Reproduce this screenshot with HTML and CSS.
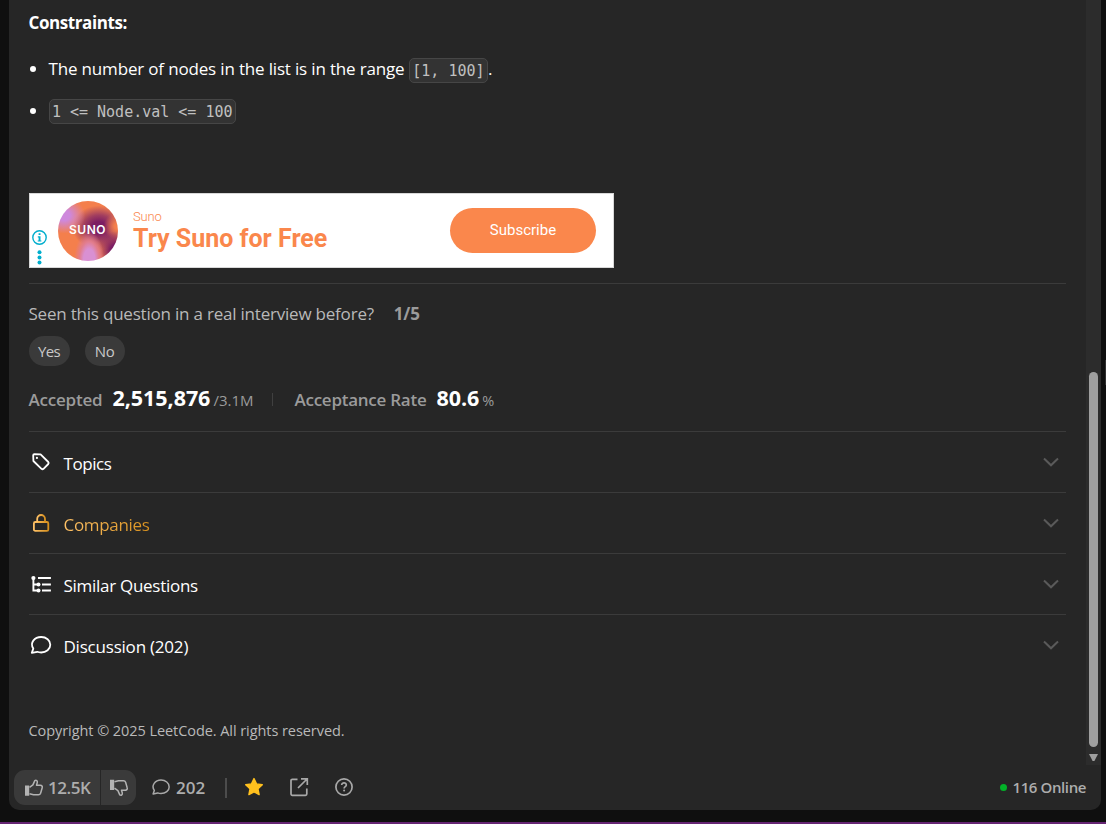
FILE: index.html
```html
<!DOCTYPE html>
<html lang="en">
<head>
<meta charset="utf-8">
<title>LeetCode</title>
<link rel="stylesheet" href="styles.css">
</head>
<body>
<div class="panel">
  <div class="scroller">
    <main class="content">
      <h2 class="constraints-title"><span class="t-constraints">Constraints:</span></h2>
      <ul class="constraints">
        <li><span class="t-range">The number of nodes in the list is in the range</span> <code>[1, 100]</code>.</li>
        <li><code>1 &lt;= Node.val &lt;= 100</code></li>
      </ul>
      <section class="ad">
        <div class="ad-marks">
          <svg width="16" height="36" viewBox="0 0 16 36"><circle cx="8.500" cy="8.500" r="6.700" fill="none" stroke="#00aecd" stroke-width="1.400"/><path d="M7.600 4.300h1.900v1.800H7.600zM6.800 7.300h2.700v4.200h.9v1.100H6.700v-1.100h.9V8.400h-.8z" fill="#00aecd"/><g fill="#00aecd"><circle cx="8.500" cy="23.300" r="2"/><circle cx="8.500" cy="28.400" r="2"/><circle cx="8.500" cy="33.500" r="2"/></g></svg>
        </div>
        <div class="ad-logo"><span>SUNO</span></div>
        <div class="ad-copy"><div class="ad-brand">Suno</div><div class="ad-head">Try Suno for Free</div></div>
        <div class="ad-button">Subscribe</div>
      </section>
      <section class="stats">
        <div class="seen"><span class="t-seen">Seen this question in a real interview before?</span><b class="t-frac">1/5</b></div>
        <div class="answers"><div class="pill yes">Yes</div><div class="pill no">No</div></div>
        <div class="numbers">
          <span class="label t-acc">Accepted</span><span class="big">2,515,876</span><span class="small">/3.1M</span>
          <i class="sep"></i>
          <span class="label t-rate">Acceptance Rate</span><span class="big">80.6</span><span class="small t-pct">%</span>
        </div>
      </section>
      <div class="row"><svg class="ic" width="24" height="24" viewBox="0 0 24 24" fill="none" stroke="#fff" stroke-width="1.800" stroke-linejoin="round"><path d="M5.300 4.200 11.600 4.400 19.300 12Q20.100 13 19.300 14L14.500 18.800Q13.500 19.600 12.500 18.800L4.400 11 4.200 5.300Q4.200 4.200 5.300 4.200Z"/><circle cx="7.900" cy="7.900" r="1.100" fill="#fff" stroke="none"/></svg><span class="t-topics">Topics</span><svg class="chev" width="16" height="10" viewBox="0 0 16 10"><path d="M1 1.500 8 8.300 15 1.500"/></svg></div>
      <div class="row"><svg class="ic" width="24" height="24" viewBox="0 0 24 24" fill="none" stroke="url(#gold)" stroke-width="1.800"><defs><linearGradient id="gold"><stop stop-color="#ffc267"/><stop offset="1" stop-color="#d7901e"/></linearGradient></defs><rect x="4.900" y="11" width="14.400" height="8.800" rx="1.400"/><path d="M8.200 11V7.900a3.900 3.900 0 0 1 7.800 0v3.100"/></svg><span class="companies">Companies</span><svg class="chev" width="16" height="10" viewBox="0 0 16 10"><path d="M1 1.500 8 8.300 15 1.500"/></svg></div>
      <div class="row"><svg class="ic" width="24" height="24" viewBox="0 0 24 24" fill="none" stroke="#fff" stroke-width="1.900"><path d="M4.400 5v13.500H9.500M4.400 12.500H9.500M9 6H21.900M13 12.500H21.900M13 18.500H21.900"/><g fill="#fff" stroke="none"><circle cx="4.400" cy="6" r="2.100"/><circle cx="9.500" cy="12.500" r="2"/><circle cx="9.500" cy="18.500" r="2"/></g></svg><span class="t-sim">Similar Questions</span><svg class="chev" width="16" height="10" viewBox="0 0 16 10"><path d="M1 1.500 8 8.300 15 1.500"/></svg></div>
      <div class="row last"><svg class="ic" width="24" height="24" viewBox="0 0 24 24" fill="none" stroke="#fff" stroke-width="1.800" stroke-linejoin="round"><path d="M2.800 19.900 4.300 15.600C.5 9.800 5.500 4 12.200 4c5 0 9.100 3.300 9.100 7.700S17.200 19.500 12.200 19.500c-1.500 0-2.800-.2-3.900-.7Z"/></svg><span class="t-disc">Discussion (202)</span><svg class="chev" width="16" height="10" viewBox="0 0 16 10"><path d="M1 1.500 8 8.300 15 1.500"/></svg></div>
      <footer class="copyright">Copyright © 2025 LeetCode. All rights reserved.</footer>
    </main>
    <div class="track"><div class="thumb"></div><div class="arrow"></div></div>
  </div>
  <div class="bar">
    <div class="votes">
      <div class="up"><svg width="20" height="20" viewBox="0 0 20 20"><path d="M1 7.500h4.200v10.300H1z" fill="#b3b3b3"/><path d="M5.500 9.300 8.900 6.900 10.800 2.600c1.500-.9 2.900.4 2.500 1.900L12.500 7.300h3.900c1.400 0 2.200 1.200 1.800 2.400l-1.600 5.500c-.4 1.100-1 1.500-2.100 1.500H9.500L5.500 15.700" fill="none" stroke="#b3b3b3" stroke-width="1.500" stroke-linejoin="round"/></svg><b class="t-votes">12.5K</b></div>
      <div class="down"><svg width="20" height="20" viewBox="0 0 20 20"><g transform="matrix(1 0 0 -1 0 19.500)"><path d="M1 7.500h4.200v10.300H1z" fill="#b3b3b3"/><path d="M5.500 9.300 8.900 6.900 10.800 2.600c1.500-.9 2.900.4 2.500 1.900L12.500 7.300h3.900c1.400 0 2.200 1.200 1.800 2.400l-1.600 5.500c-.4 1.100-1 1.500-2.100 1.500H9.500L5.500 15.700" fill="none" stroke="#b3b3b3" stroke-width="1.500" stroke-linejoin="round"/></g></svg></div>
    </div>
    <svg class="comment" width="20" height="20" viewBox="0 0 24 24" fill="none" stroke="#a8a8a8" stroke-width="1.800" stroke-linejoin="round"><path d="M2.500 19.100 4 14.900C-.2 9 5 2.500 12 2.500c5.400 0 9.800 3.500 9.800 8.200s-4.400 7.900-9.800 7.900c-1.500 0-2.800-.2-3.900-.7Z"/></svg><b>202</b>
    <i class="bar-sep"></i>
    <svg class="star" width="20" height="20" viewBox="0 0 20 20"><path d="M10 1.600 12.500 6.900 18.300 7.700 14 11.800 15.100 17.600 10 14.800 4.900 17.600 6 11.800 1.700 7.700 7.500 6.900Z" fill="#ffc01e" stroke="#ffc01e" stroke-width="1.400" stroke-linejoin="round"/></svg>
    <svg class="share" width="20" height="20" viewBox="0 0 20 20" fill="none" stroke="#a8a8a8" stroke-width="1.700"><path d="M8.500 2.300H3.300a1.300 1.300 0 0 0-1.300 1.300V17a1.300 1.300 0 0 0 1.300 1.300H16.500A1.300 1.300 0 0 0 17.800 17V11.500M12 1.800h6.300V8M18 2 9 11"/></svg>
    <svg class="help" width="20" height="20" viewBox="0 0 20 20" fill="none" stroke="#a8a8a8" stroke-width="1.700"><circle cx="10" cy="10" r="8.100"/><path d="M7.700 8.100C7.700 5 12.400 5.200 12.300 8c0 1.600-2.200 1.600-2.200 3.400"/><circle cx="10.100" cy="13.600" r="1" fill="#a8a8a8" stroke="none"/></svg>
    <i class="dot"></i><span class="online">116 Online</span>
  </div>
</div>
<div class="edge"></div>
<div class="purple"></div>
</body>
</html>
```
FILE: styles.css
```css
* { box-sizing: border-box; }
body { margin: 0; width: 1106px; height: 824px; background: #0f0f0f; color: #fff; font-family: "Open Sans", "Noto Sans", sans-serif; font-size: 17px; overflow: hidden; position: relative; }
span, b { white-space: nowrap; }
svg { display: block; flex: none; }
.panel { margin-left: 9px; width: 1092px; height: 810px; background: #262626; border-radius: 0 0 10px 10px; overflow: hidden; }
.scroller { display: flex; height: 765px; }
.content { width: 1077px; padding: 0 20px 0 19.5px; }
.constraints-title { margin: 0; padding-top: 9px; height: 48px; font-size: 17px; line-height: 28px; font-weight: 700; letter-spacing: -.42px; }
.constraints { margin: 0; padding: 0 0 0 20px; height: 145px; list-style: none; line-height: 42px; }
.constraints li { height: 42px; position: relative; white-space: nowrap; }
.constraints li::before { content: ""; position: absolute; left: -19px; top: 18px; width: 6px; height: 6px; border-radius: 50%; background: #fff; }
.t-range { letter-spacing: -.168px; }
code { font: 15px/20px "DejaVu Sans Mono", monospace; padding: 2px 2.4px 1px; border: 1px solid #464646; border-radius: 5px; background: #333; color: #c0c0c0; display: inline-block; height: 25px; vertical-align: -1px; }
.constraints li + li code { vertical-align: 0; }
.ad { display: flex; width: 585px; height: 75px; background: #fff; border: 1px solid #d8d8d8; font-family: Roboto, sans-serif; color: #fa874c; }
.ad-marks { width: 28px; padding: 35px 0 0 1px; }
.ad-logo { width: 60px; height: 60px; margin-top: 7px; border-radius: 50%; display: flex; align-items: center; justify-content: center; color: #fff; font: 600 12px/18px Inter, sans-serif; letter-spacing: .5px; padding-bottom: 2px; background: radial-gradient(ellipse at 52% 98%, #d990d3 0 13%, #e27d8d 22%, transparent 34%), radial-gradient(ellipse at 10% 24%, #ce88dc 0 8%, transparent 28%), radial-gradient(circle at 97% 82%, #7c1d63 0 8%, transparent 25%), radial-gradient(circle at 99% 42%, #f47f4c 0 4%, transparent 20%), radial-gradient(ellipse at 68% 44%, #7c1d63 0 12%, #a23e5f 26%, transparent 46%), #f47f4c; }
.ad-copy { margin-left: 15.5px; width: 316.5px; padding-top: 15px; }
.ad-brand { font-size: 13px; font-weight: 300; line-height: 16px; letter-spacing: -.2px; }
.ad-head { font-size: 25px; font-weight: 700; line-height: 28px; }
.ad-button { width: 146px; height: 45px; margin-top: 14px; border-radius: 23px; background: #fa874c; color: #fff; font-size: 15px; line-height: 44px; text-align: center; padding-left: 1px; }
.stats { margin-top: 15px; height: 148px; border-top: 1px solid #3b3b3b; color: #b9b9b9; }
.seen { display: flex; gap: 20px; height: 52px; padding-top: 16px; line-height: 28px; }
.t-seen { letter-spacing: -.21px; }
.t-frac { font-weight: 700; color: #9b9b9b; letter-spacing: -.2px; }
.answers { display: flex; gap: 15px; }
.pill { height: 30px; border-radius: 15px; background: #3a3a3a; color: #c9c9c9; font-size: 15px; line-height: 30px; text-align: center; letter-spacing: -.3px; }
.yes { width: 41px; letter-spacing: -.65px; }
.no { width: 40px; }
.numbers { display: flex; align-items: baseline; height: 48px; padding-top: 16px; line-height: 32px; white-space: nowrap; }
.label { font-weight: 600; color: #9b9b9b; }
.t-acc { width: 74px; letter-spacing: -.2px; }
.t-rate { width: 132px; letter-spacing: -.25px; }
.big { font-size: 21.5px; font-weight: 700; color: #fff; margin-left: 10px; letter-spacing: -.05px; }
.small { font-size: 15px; color: #9b9b9b; margin-left: 3px; }
.t-pct { font-size: 14.5px; }
.sep { width: 1px; height: 13px; background: #404040; margin: 0 21px 0 19px; }
.row { display: flex; align-items: center; height: 61px; border-top: 1px solid #3b3b3b; }
.ic { margin: 0 11px 0 0; }
.row span { line-height: 30px; padding-top: 4px; }
.t-topics { letter-spacing: -.42px; }
.t-sim { letter-spacing: -.28px; }
.t-disc { letter-spacing: -.21px; }
.companies { letter-spacing: -.32px; background: linear-gradient(90deg, #ffc267, #d7901e); -webkit-background-clip: text; background-clip: text; color: transparent; }
.chev { margin: 0 7.5px 0 auto; fill: none; stroke: #5a5a5a; stroke-width: 2; }
.copyright { padding-top: 44px; font-size: 14.5px; line-height: 24px; letter-spacing: -.065px; color: #b9b9b9; }
.track { width: 15px; height: 765px; background: #2c2c2c; display: flex; flex-direction: column; align-items: center; padding-top: 372px; }
.thumb { width: 9px; height: 375px; border-radius: 5px; background: #9f9f9f; }
.arrow { margin-top: 7px; width: 9px; height: 7px; background: #9f9f9f; clip-path: polygon(0 0, 100% 0, 60% 100%, 40% 100%); }
.bar { display: flex; align-items: center; height: 45px; padding: 0 15px 0 5px; color: #adadad; font-weight: 600; font-size: 17px; line-height: 28px; }
.bar b { font-weight: 600; padding-top: 1px; }
.votes { display: flex; gap: 1px; height: 35px; border-radius: 11px; overflow: hidden; }
.up { display: flex; align-items: center; width: 86px; padding-left: 10px; gap: 4px; background: #3a3a3a; }
.t-votes { letter-spacing: -.43px; }
.down { display: flex; align-items: center; width: 35px; padding-left: 8px; background: #3a3a3a; }
.comment { margin: 0 5px 0 15px; }
.bar-sep { width: 1.5px; height: 20px; margin: 0 17.5px 0 20px; background: #4c4c4c; }
.star, .share, .help { margin-bottom: 2px; }
.share { margin-left: 25px; margin-right: 25px; }
.dot { width: 7px; height: 7px; border-radius: 50%; background: #02b128; margin: 0 6px 0 auto; }
.online { font-size: 15px; letter-spacing: -.4px; line-height: 26px; padding-bottom: 2px; }
.edge { position: absolute; left: 1105px; top: 360px; width: 1px; height: 25px; background: #303030; }
.purple { position: absolute; left: 0; top: 822px; width: 1106px; height: 2px; background: #652573; }
```
